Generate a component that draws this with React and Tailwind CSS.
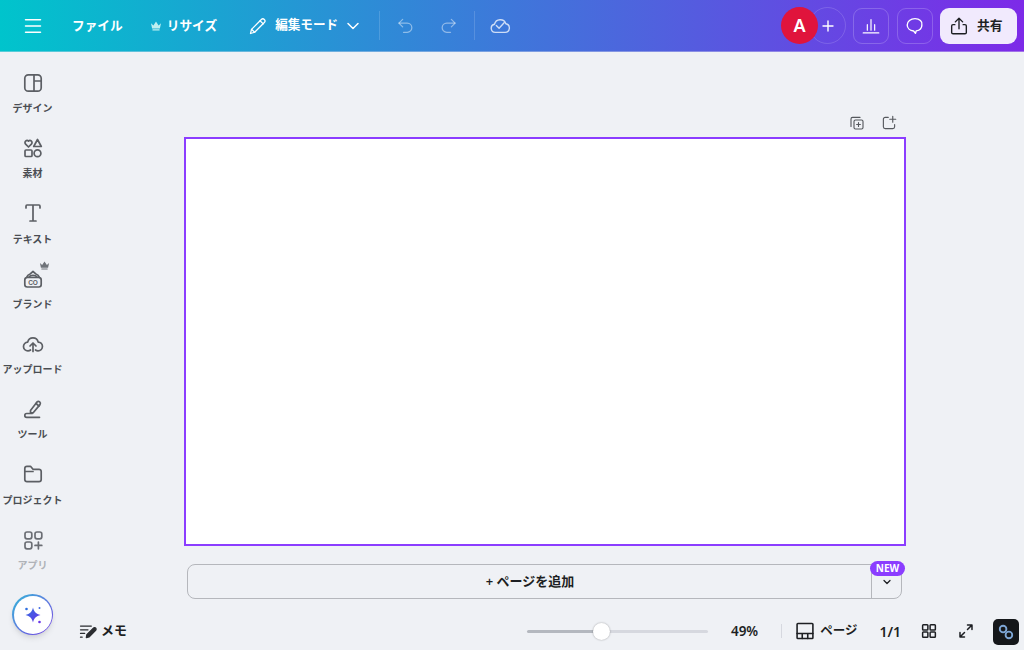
import React from "react";

const S = ({ size = 24, className = "", sw = 1.5, children, vb = "0 0 24 24" }) => (
  <svg width={size} height={size} viewBox={vb} fill="none" stroke="currentColor" strokeWidth={sw} strokeLinecap="round" strokeLinejoin="round" className={className}>{children}</svg>
);

const Crown = ({ size = 12, className = "" }) => (
  <svg width={size} height={size} viewBox="0 0 12 12" fill="currentColor" className={className}>
    <path d="M1 3.2 3.4 5.4 6 1.6 8.6 5.4 11 3.2 9.9 8.4H2.1Z" />
    <rect x="2.4" y="9.2" width="7.2" height="1.2" rx=".5" />
  </svg>
);

const navItems = [
  { label: "デザイン", icon: <S sw={1.7}><rect x="3.8" y="3.8" width="16.4" height="16.4" rx="3.5" /><path d="M13 3.8v16.4M13 10h7.2" /></S> },
  { label: "素材", icon: <S sw={1.7}><path d="M7.5 11 4.6 8.1a2.1 2.1 0 0 1 0-3 2.1 2.1 0 0 1 2.9 0 2.1 2.1 0 0 1 2.9 0 2.1 2.1 0 0 1 0 3Z" /><path d="m16.5 3.5 3.8 7h-7.6Z" /><rect x="4" y="14" width="7" height="6.5" rx="1" /><circle cx="16.5" cy="17.2" r="3.4" /></S> },
  { label: "テキスト", icon: <S sw={1.7}><path d="M5 7V5.2C5 4.5 5.4 4 6 4h12c.6 0 1 .5 1 1.2V7M12 4v16M9 20h6" /></S> },
  { label: "ブランド", icon: <S sw={1.7}><rect x="3.8" y="11.500" width="16.400" height="9.500" rx="2.400" /><path d="M5.500 11.500c.6-2 2.200-3.200 4-3.800M18.500 11.500c-.6-2-2.200-3.200-4-3.800M8 11c.8-1 2.300-1.600 4-1.600s3.200.6 4 1.600M9.500 7.700 12 5.500l2.500 2.200" /><text x="12" y="18.700" textAnchor="middle" fontSize="6.500" fontWeight="700" fill="currentColor" stroke="none" fontFamily="'Liberation Sans', sans-serif">CO</text></S>, crown: true },
  { label: "アップロード", icon: <S sw={1.7}><path d="M7 18.800a4.300 4.300 0 0 1-.3-8.700 5.400 5.400 0 0 1 10.500 0 4.300 4.300 0 0 1-.2 8.700c-1 0-1.700-.3-2.500-.8M7 18.800c1 0 1.900-.3 2.500-.8" /><path d="M12 19.500v-8M9 14l3-3 3 3" /></S> },
  { label: "ツール", icon: <S sw={1.7}><path d="m9.500 13.500 6.500-8.500a2 2 0 0 1 3 2.600l-6.800 8.200H9.500Z" /><path d="M15 6.500 18 9" /><path d="M11 16.500H5.700a1.900 1.900 0 0 0 0 3.800h12.800" /></S> },
  { label: "プロジェクト", icon: <S sw={1.7}><path d="M3.800 17.500v-11A2.200 2.200 0 0 1 6 4.300h3.500l2.500 3h6a2.200 2.200 0 0 1 2.200 2.200v8a2.200 2.200 0 0 1-2.200 2.200H6a2.200 2.200 0 0 1-2.200-2Z" /><path d="M3.800 9.500H12" /></S> },
  { label: "アプリ", dim: true, icon: <S sw={1.7} className="text-[#6b6e74]"><rect x="4" y="4" width="6.800" height="6.800" rx="2" /><rect x="14" y="4" width="6.800" height="6.800" rx="2" /><rect x="4" y="14" width="6.800" height="6.800" rx="2" /><path d="M17.400 14v6.800M14 17.400h6.800" /></S> },
];

const NavItem = ({ item }) => (
  <div className="relative flex h-[65.3px] flex-col items-center pt-[8.500px] text-[#5c5f64]">
    <div className="relative h-[24px] w-[24px]">
      {item.icon}
      {item.crown && <Crown size={11} className="absolute -top-[6px] left-[18px] text-[#6f7379]" />}
    </div>
    <span className={`mt-[6.500px] whitespace-nowrap text-[10px] leading-[14px] font-bold ${item.dim ? "text-[#b0b3b8]" : "text-[#4a4d52]"}`}>{item.label}</span>
  </div>
);

const Header = () => (
  <header className="flex h-[52px] shrink-0 items-center border-b border-[#d9dcec]/40 bg-[linear-gradient(90deg,#00c4cc,#7d2ae8)] pl-[21px] pr-[7px] text-white">
    <S size={24}><path d="M4.500 5.700h15M4.500 12h15M4.500 18.300h15" /></S>
    <span className="ml-[27px] text-[12.700px] font-bold">ファイル</span>
    <Crown size={12} className="ml-[27px] text-[#bfeff0]" />
    <span className="ml-[5px] text-[12.700px] font-bold">リサイズ</span>
    <S size={20} className="ml-[31px]"><path d="m3 21 1.200-5L16 4.200a2.500 2.500 0 0 1 3.600 3.600L8 19.500Z" /><path d="m14.500 5.700 3.800 3.800M4.200 16 8 19.500" /></S>
    <span className="ml-[7px] text-[12.600px] font-bold">編集モード</span>
    <S size={20} sw={1.800} className="ml-[5px]"><path d="m6 9 6 6 6-6" /></S>
    <div className="ml-[16px] h-[29px] w-px bg-white/15" />
    <S size={20} className="ml-[16px] text-white/45"><path d="M8 4 3.500 8.500 8 13" /><path d="M3.500 8.500h10a5.500 5.500 0 0 1 0 11H9" /></S>
    <S size={20} className="ml-[22px] text-white/45"><path d="m16 4 4.500 4.500L16 13" /><path d="M20.500 8.500h-10a5.500 5.500 0 0 0 0 11H15" /></S>
    <div className="ml-[16px] h-[29px] w-px bg-white/15" />
    <S size={22} className="ml-[14px] text-white/75"><path d="M7 19a4.500 4.500 0 0 1-1-8.900 6.500 6.500 0 0 1 12.400-.6A4.800 4.800 0 0 1 17.500 19Z" /><path d="m8 11.500 3 3 5.500-6" /></S>
    <div className="ml-auto flex items-center">
      <div className="relative ml-[-8px] mr-[7px] flex h-[37px] w-[37px] items-center justify-center rounded-full border border-white/15 text-white">
        <S size={16} sw={2.100}><path d="M12 4.500v15M4.500 12h15" /></S>
      </div>
    </div>
    <div className="flex h-[36px] w-[36px] items-center justify-center rounded-[9px] border border-white/20">
      <S size={22} sw={1.300}><path d="M3.500 19.500h17M8 16.500V10.500M12 16.500V5M16 16.500v-6" /></S>
    </div>
    <div className="ml-[8px] flex h-[36px] w-[36px] items-center justify-center rounded-[9px] border border-white/20">
      <S size={22}><path d="M12 4c-4.800 0-8.500 2.900-8.500 6.800 0 3.500 3 6.200 7 6.700l2 2.500.8-2.600c3.600-.7 6.200-3.300 6.200-6.600C20.500 6.900 16.800 4 12 4Z" /></S>
    </div>
    <div className="ml-[7px] flex h-[36px] w-[77px] items-center rounded-[9px] bg-[#f1eafd] pl-[8px] text-[#1d1f23]">
      <S size={22} sw={1.500}><path d="M12 15V4M8 7.500 12 3.500l4 4" /><path d="M7.500 10.500H5.500a1.500 1.500 0 0 0-1.500 1.500v7a1.500 1.500 0 0 0 1.500 1.500h13A1.500 1.500 0 0 0 20 19v-7a1.500 1.500 0 0 0-1.500-1.500h-2" /></S>
      <span className="ml-[7px] text-[12.800px] font-bold">共有</span>
    </div>
  </header>
);

export default function App() {
  return (
    <div className="relative flex h-[650px] w-[1024px] flex-col overflow-hidden bg-[#eff1f5]" style={{ fontFamily: '"Noto Sans", "Noto Sans CJK JP", sans-serif' }}>
      <Header />
      <div className="absolute left-[781px] top-[7px] z-10 flex h-[37px] w-[37px] items-center justify-center rounded-full bg-[#e0143c] text-[18px] font-semibold text-white">A</div>
      <div className="flex min-h-0 flex-1">
        <aside className="flex w-[65px] shrink-0 flex-col pt-[10px]">
          {navItems.map((it) => <NavItem key={it.label} item={it} />)}
          <div className="ml-[12px] mt-[10px] flex h-[41px] w-[41px] shrink-0 items-center justify-center rounded-full bg-gradient-to-br from-[#1fb6d8] to-[#6a2ee0] p-[1.500px] shadow-md">
            <div className="flex h-full w-full items-center justify-center rounded-full bg-white">
              <svg width="22" height="22" viewBox="0 0 22 22">
                <defs>
                  <linearGradient id="sp" x1="0" y1="0" x2="1" y2="1"><stop offset="0" stopColor="#2f6fe0" /><stop offset="1" stopColor="#6a35e8" /></linearGradient>
                </defs>
                <path d="M11 3.500c.9 4.300 3.200 6.600 7.500 7.500-4.300.9-6.600 3.200-7.500 7.500-.9-4.300-3.200-6.600-7.500-7.500 4.300-.9 6.600-3.200 7.500-7.500Z" fill="url(#sp)" />
                <circle cx="4.500" cy="5" r="1.300" fill="#2f6fe0" />
                <circle cx="17.500" cy="4" r="1" fill="#3f6ae4" />
                <circle cx="17.500" cy="18" r="1.300" fill="#6a35e8" />
              </svg>
            </div>
          </div>
        </aside>
        <main className="flex min-w-0 flex-1 flex-col">
          <div className="flex h-[85px] items-end justify-end pb-[5px] pl-[119px] pr-[126px] text-[#55585d]">
            <div className="flex w-[50px] items-center justify-between">
              <S size={18}><rect x="8" y="8" width="12" height="12" rx="2" /><path d="M16 4.500H6A2 2 0 0 0 4 6.500v10" /><path d="M14 11.500v5M11.500 14h5" /></S>
              <S size={18}><path d="M11 4.500H7A2.500 2.500 0 0 0 4.500 7v10A2.500 2.500 0 0 0 7 19.500h10a2.500 2.500 0 0 0 2.500-2.500v-3" /><path d="M17 3v8M13 7h8" /></S>
            </div>
          </div>
          <div className="ml-[119px] h-[409px] w-[722px] border-2 border-[#8b3dff] bg-white" />
          <div className="relative ml-[122px] mt-[18px] flex h-[35px] w-[715px] rounded-[8px] border border-[#b5b7bc] text-[#1d1f23]">
            <div className="flex flex-1 items-center justify-center pl-[1px] text-[13px] font-semibold">+ ページを追加</div>
            <div className="flex w-[30px] items-center justify-center border-l border-[#b5b7bc] pt-[1px]">
              <S size={12} sw={2.500}><path d="m6 9 6 6 6-6" /></S>
            </div>
            <span className="absolute -top-[4px] right-[-4px] flex h-[15px] w-[35px] items-center justify-center rounded-full bg-[#8b3dff] text-[10px] font-bold text-white">NEW</span>
          </div>
          <div className="mt-auto flex h-[38px] items-center pl-[13px] pr-[5px] text-[#1d1f23]">
            <S size={20} sw={1.500} className="text-[#2b2d31]"><path d="M3 6h13M3 10.500h9M3 15h5M3 19.500h2" /><path d="m10 20 .6-3.500L18.500 8.500a1.800 1.800 0 0 1 2.700 2.600L13.500 19Z" fill="currentColor" /></S>
            <span className="ml-[3px] text-[13px] font-bold">メモ</span>
            <div className="relative ml-[400px] flex h-[16px] w-[181px] items-center">
              <div className="h-[3px] w-[75px] rounded-l-full bg-[#b4b8bf]" />
              <div className="h-[3px] flex-1 rounded-r-full bg-[#d6d8df]" />
              <div className="absolute left-[66px] top-0 h-[17px] w-[17px] rounded-full bg-white shadow-[0_0_2px_rgba(0,0,0,.35)]" />
            </div>
            <span className="ml-[23px] text-[13.500px] font-semibold">49%</span>
            <div className="ml-[23px] h-[14px] w-px bg-[#d6d8df]" />
            <S size={20} sw={1.900} className="ml-[13px]"><rect x="2.500" y="3" width="19" height="18" rx="1" /><path d="M2.500 15h19M8.700 15v6M15.300 15v6" /></S>
            <span className="ml-[5px] text-[12.500px] font-semibold">ページ</span>
            <span className="ml-[22px] text-[14px] font-semibold">1/1</span>
            <S size={18} sw={2} className="ml-[19px]"><rect x="3.500" y="3.500" width="7" height="7" rx="1" /><rect x="13.500" y="3.500" width="7" height="7" rx="1" /><rect x="3.500" y="13.500" width="7" height="7" rx="1" /><rect x="13.500" y="13.500" width="7" height="7" rx="1" /></S>
            <S size={18} sw={2} className="ml-[19px]"><path d="M14 4h6v6M20 4l-6 6M10 20H4v-6M4 20l6-6" /></S>
            <div className="ml-[18px] mt-[2px] flex h-[26px] w-[26px] items-center justify-center rounded-[5px] bg-[#15171a]">
              <S size={20} sw={2.200} className="text-[#7ea6d6]"><circle cx="8.500" cy="8.500" r="4" /><circle cx="15.500" cy="15.500" r="4" /></S>
            </div>
          </div>
        </main>
      </div>
    </div>
  );
}
